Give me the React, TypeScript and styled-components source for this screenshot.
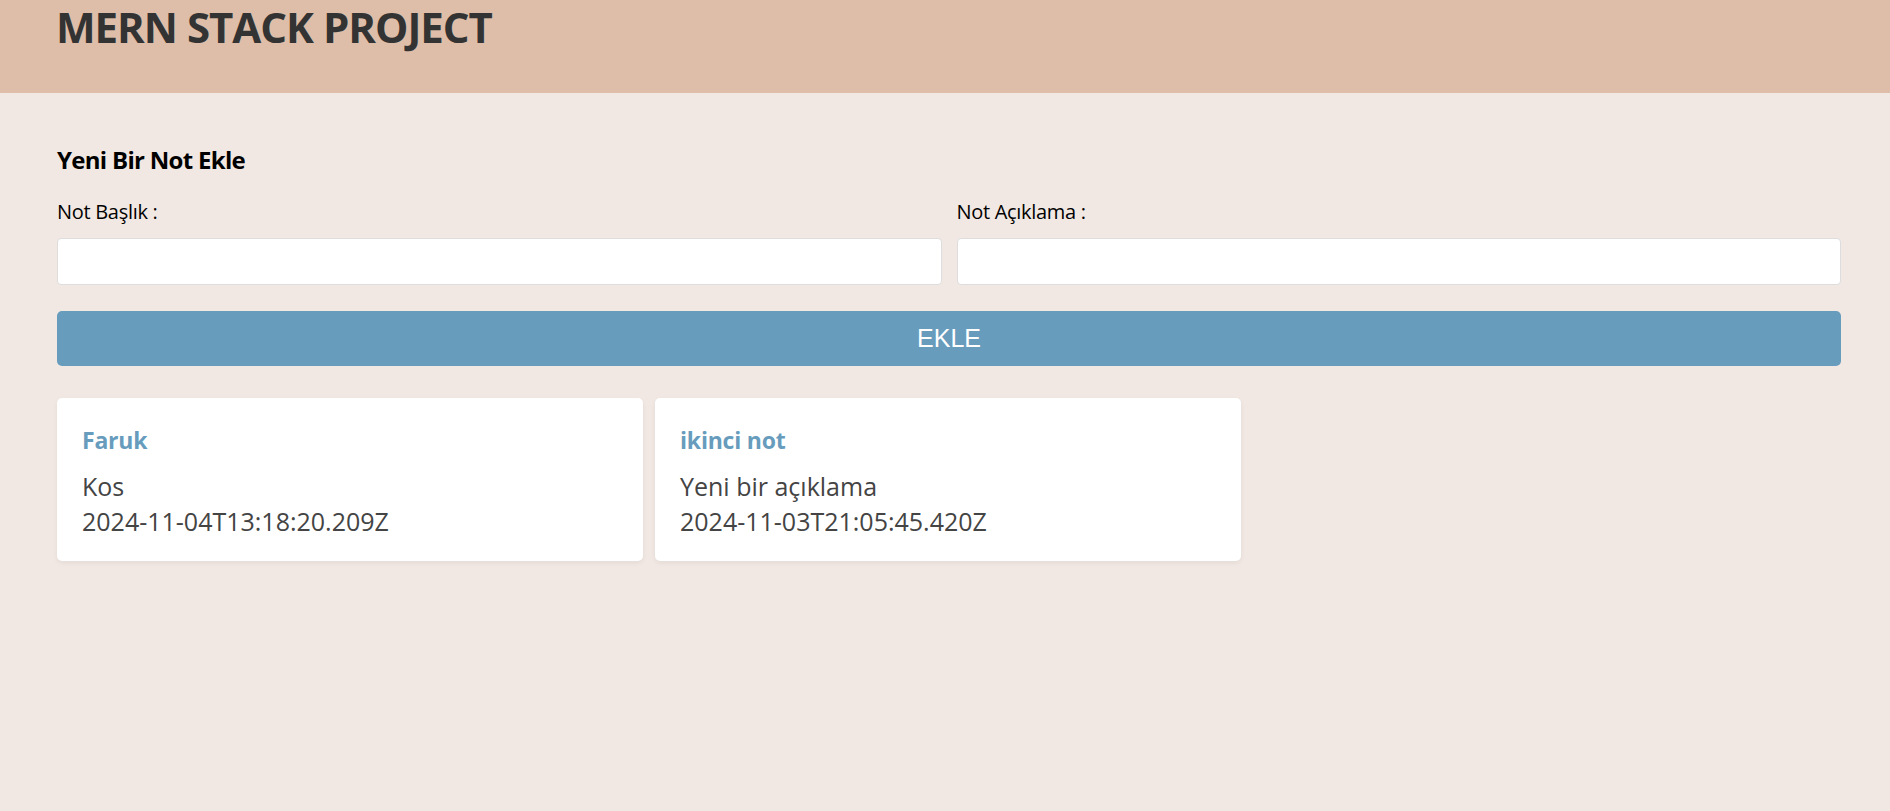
import { FC } from "react";
import styled, { createGlobalStyle } from "styled-components";

const GlobalStyle = createGlobalStyle`
    body {
        margin: 0;
        background-color: #f2e8e3;
        font-family: "Open Sans", "Noto Sans", sans-serif;
    }
`;

const notes = [
    { _id: "1", title: "Faruk", description: "Kos", createdAt: "2024-11-04T13:18:20.209Z" },
    { _id: "2", title: "ikinci not", description: "Yeni bir açıklama", createdAt: "2024-11-03T21:05:45.420Z" },
];

const App: FC = () => {
    return (
        <>
            <GlobalStyle />
            <Header>
                <HeaderTitle>MERN STACK PROJECT</HeaderTitle>
            </Header>
            <Main>
                <FormTitle>Yeni Bir Not Ekle</FormTitle>
                <FormRow>
                    <Field>
                        <Label htmlFor="title">Not Başlık :</Label>
                        <Input id="title" type="text" />
                    </Field>
                    <Field>
                        <Label htmlFor="desc">Not Açıklama :</Label>
                        <Input id="desc" type="text" />
                    </Field>
                </FormRow>
                <AddButton>EKLE</AddButton>
                <NoteList>
                    {notes.map((note) => (
                        <NoteCard key={note._id}>
                            <NoteTitle>{note.title}</NoteTitle>
                            <NoteText>{note.description}</NoteText>
                            <NoteText>{note.createdAt}</NoteText>
                        </NoteCard>
                    ))}
                </NoteList>
            </Main>
        </>
    );
};

export default App;

const Header = styled.header`
    height: 93px;
    box-sizing: border-box;
    padding: 2px 56px 0;
    background-color: #debea8;
`;

const HeaderTitle = styled.h1`
    margin: 0;
    font-size: 42px;
    line-height: 50px;
    font-weight: 700;
    letter-spacing: -1px;
    color: #333;
`;

const Main = styled.main`
    padding: 52px 49px 40px 57px;
`;

const FormTitle = styled.h3`
    margin: 0 0 24px;
    font-size: 24px;
    line-height: 30px;
    font-weight: 700;
    letter-spacing: -0.7px;
    color: #000;
`;

const FormRow = styled.div`
    display: grid;
    grid-template-columns: 1fr 1fr;
    gap: 15px;
`;

const Field = styled.div`
    display: flex;
    flex-direction: column;
`;

const Label = styled.label`
    font-size: 20px;
    line-height: 26px;
    letter-spacing: -0.3px;
    color: #000;
    margin-bottom: 13px;
`;

const Input = styled.input`
    height: 47px;
    box-sizing: border-box;
    border: 1px solid #ddd;
    border-radius: 4px;
    background-color: #fff;
    padding: 0 10px;
    font-size: 18px;
    outline: none;
`;

const AddButton = styled.button`
    display: block;
    width: 100%;
    height: 55px;
    margin-top: 26px;
    border: none;
    border-radius: 5px;
    background-color: #679cbd;
    color: #fff;
    font-family: "Liberation Sans", Arial, sans-serif;
    font-size: 25px;
    cursor: pointer;
`;

const NoteList = styled.div`
    display: flex;
    flex-wrap: wrap;
    gap: 12px;
    margin-top: 32px;
`;

const NoteCard = styled.div`
    width: 586px;
    box-sizing: border-box;
    padding: 27px 25px 22px;
    background-color: #fff;
    border-radius: 5px;
    box-shadow: 0 2px 5px rgba(0, 0, 0, 0.06);
`;

const NoteTitle = styled.h3`
    margin: 0 0 14px;
    font-size: 23px;
    line-height: 30px;
    font-weight: 700;
    letter-spacing: -0.2px;
    color: #679cbd;
`;

const NoteText = styled.div`
    font-size: 25px;
    line-height: 35px;
    color: #444;
`;
